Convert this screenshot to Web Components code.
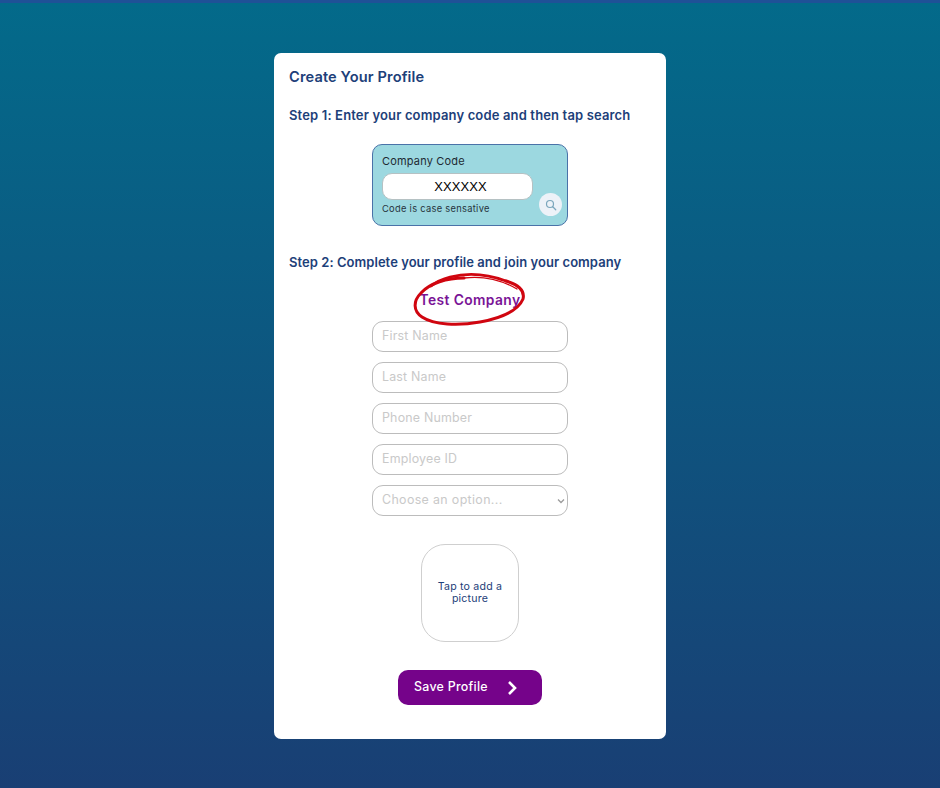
<!DOCTYPE html>
<html><head><meta charset="utf-8"><title>Create Your Profile</title>
<style>
html,body{margin:0;padding:0;height:100%}
body{font-family:Inter,"Noto Sans",sans-serif}
</style></head><body>
<template id="t-page"><style>
:host{display:flex;flex-direction:column;align-items:center;box-sizing:border-box;width:940px;height:788px;border-top:3px solid #1f5197;padding-top:50px;overflow:hidden;background:linear-gradient(180deg,#036a8a 0%,#193f74 100%)}
</style><slot></slot></template>

<template id="t-card"><style>
:host{display:flex;flex-direction:column;box-sizing:border-box;width:392px;height:686px;background:#fff;border-radius:7px;padding:15px 15px 0 15px;color:#1d4079}
h1{margin:0;font:600 14.6px/18px Inter,sans-serif;letter-spacing:.13px;color:#1d4079}
</style><h1><slot name="title"></slot></h1><slot></slot></template>

<template id="t-step"><style>
:host{display:block;font:600 13px/16px Inter,sans-serif;color:#1d4079;letter-spacing:.05px}
:host([wide]){letter-spacing:.15px}
</style><slot></slot></template>

<template id="t-code"><style>
:host{display:block;position:relative;box-sizing:border-box;width:196px;height:82px;background:#9cd8e0;border:1px solid #4a72a8;border-radius:10px;padding:9px 9px 0 9px;color:#1e2a33;align-self:center;margin-top:21px}
.l{font:400 11px/14px Inter,sans-serif;letter-spacing:.18px}
.i{box-sizing:border-box;width:151px;height:27px;margin-top:5px;background:#fff;border:1.5px solid #b5c1c3;border-radius:10px;display:flex;align-items:center;justify-content:center;padding-left:6px;font:400 13px/1 "Liberation Sans",sans-serif;letter-spacing:.1px;color:#000}
.h{font:400 9.3px/12px Inter,sans-serif;margin-top:3px;letter-spacing:.3px;color:#27343c}
.b{position:absolute;right:5px;bottom:9px;width:23px;height:23px;border-radius:50%;background:#edf2f8;display:flex;align-items:center;justify-content:center}
</style><div class="l">Company Code</div><div class="i">XXXXXX</div><div class="h">Code is case sensative</div>
<div class="b"><svg width="12" height="12" viewBox="0 0 24 24" fill="none" stroke="#7ba6bc" stroke-width="2.4" stroke-linecap="round"><circle cx="10" cy="10" r="7"/><path d="M15.5 15.5l6 6"/></svg></div></template>

<template id="t-co"><style>
:host{display:block;position:relative;z-index:1;align-self:center;font:600 13.8px/18px Inter,sans-serif;color:#7a1496;margin-top:21px;letter-spacing:.4px;white-space:nowrap}
svg{position:absolute;left:-6px;top:-19px;width:114px;height:56px;overflow:visible;pointer-events:none}
</style><slot></slot>
<svg viewBox="0 0 114 56" fill="none" stroke="#d0050f" stroke-linecap="round">
<path stroke-width="3" d="M50 6C33 6 16 11 7 21C-1 29 -1 39 8 45C20 53 44 54 66 50C87 46 104 39 109 27C111 19 105 13 92 9"/>
<path stroke-width="2.6" d="M92 9C76 3 56 0 36 5C28 7 22 10 17 14"/>
<path stroke-width="1.3" d="M50 6C66 4 84 6 103 17"/>
</svg></template>

<template id="t-field"><style>
:host{display:flex;align-items:center;box-sizing:border-box;width:196px;height:31px;align-self:center;border:1.5px solid #bcbcbc;border-radius:11px;padding:0 9px;margin-bottom:10px;background:#fff;font:400 12.4px/16px Inter,sans-serif;color:#c9c9c9;letter-spacing:.2px;position:relative}
:host([first]){margin-top:12px}
:host([select]){letter-spacing:.36px}
.t{flex:1;transform:translateY(-1px)}
svg{display:none}
:host([select]) svg{display:block;margin-right:-7px}
</style><span class="t"><slot></slot></span><svg width="8" height="6" viewBox="0 0 8 6" fill="none" stroke="#9b9b9b" stroke-width="1.3"><path d="M1 1.5l3 3 3-3"/></svg></template>

<template id="t-pic"><style>
:host{display:flex;align-items:center;justify-content:center;box-sizing:border-box;width:98px;height:98px;align-self:center;margin-top:18px;border:1.2px solid #cfcfcf;border-radius:24px;text-align:center;font:400 10.6px/12px Inter,sans-serif;color:#1d4079;letter-spacing:.2px;padding:0 10px}
</style><slot></slot></template>

<template id="t-save"><style>
:host{display:flex;align-items:center;box-sizing:border-box;width:144px;height:35px;align-self:center;margin-top:28px;background:#75038a;border-radius:10px;color:#fff;padding-left:16px;font:500 12.4px/16px Inter,sans-serif;letter-spacing:.28px}
span{flex:1;transform:translateY(-1px)}
svg{margin-right:23px}
</style><span><slot></slot></span><svg width="13" height="16" viewBox="0 0 13 16" fill="none" stroke="#fff" stroke-width="2.6"><path d="M3 2l6 6-6 6"/></svg></template>

<x-page>
<x-card>
<span slot="title">Create Your Profile</span>
<x-step wide style="margin-top:21px">Step 1: Enter your company code and then tap search</x-step>
<x-code></x-code>
<x-step style="margin-top:28px">Step 2: Complete your profile and join your company</x-step>
<x-co>Test Company</x-co>
<x-field first>First Name</x-field>
<x-field>Last Name</x-field>
<x-field>Phone Number</x-field>
<x-field>Employee ID</x-field>
<x-field select>Choose an option...</x-field>
<x-pic>Tap to add a picture</x-pic>
<x-save>Save Profile</x-save>
</x-card>
</x-page>
<script>
for(const [n,id] of [['x-page','t-page'],['x-card','t-card'],['x-step','t-step'],['x-code','t-code'],['x-co','t-co'],['x-field','t-field'],['x-pic','t-pic'],['x-save','t-save']]){
 customElements.define(n,class extends HTMLElement{constructor(){super();this.attachShadow({mode:'open'}).appendChild(document.getElementById(id).content.cloneNode(true));}});
}
</script>
</body></html>
